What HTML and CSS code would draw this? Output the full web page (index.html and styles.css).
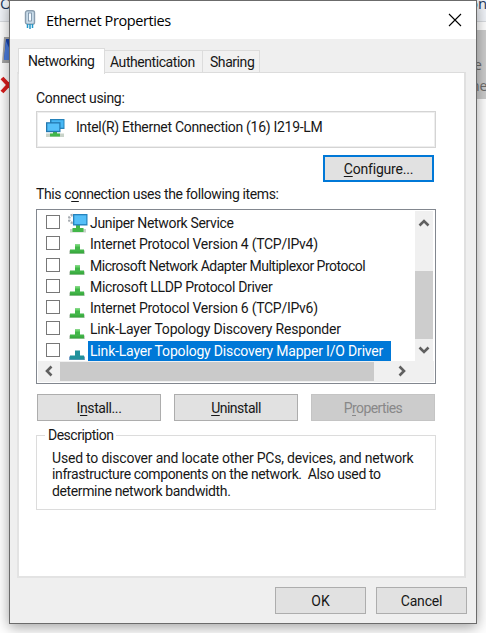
FILE: index.html
```html
<!DOCTYPE html>
<html lang="en">
<head>
<meta charset="utf-8">
<title>Ethernet Properties</title>
<link rel="stylesheet" href="styles.css">
</head>
<body>
<svg width="0" height="0" class="defs" aria-hidden="true">
  <symbol id="proto" viewBox="0 0 18 18">
    <path d="M1 13.500h16v3.500H1z" fill="#c9d3c9"/>
    <path d="M7 7.500h5v5h4v3.500H2v-3.500h5z" fill="#42b649"/>
    <path d="M7 7.500h5v2H7z" fill="#6bd36d"/>
    <path d="M2 14.500h14v2H2z" fill="#39a93f"/>
  </symbol>
  <symbol id="up" viewBox="0 0 12 8"><path d="M1.500 6.500 6 2l4.500 4.500" fill="none" stroke="#606060" stroke-width="2.600"/></symbol>
</svg>
<div class="backdrop">
  <div class="toolbar"><span>Organize ▾</span><span>Disable this network device</span><span>Diagnose this connection</span></div>
  <svg class="adapter" width="16" height="64" viewBox="0 0 16 64">
    <path d="M4 5h12v26H2z" fill="#a5a5a5"/><path d="M6 7h10v21H4z" fill="#1743ae"/><path d="M6 9l4 9 2 10H4z" fill="#4b7de0"/>
    <path d="M2 46l14 15M2 60l13-14" stroke="#d91e1e" stroke-width="4"/>
  </svg>
  <div class="adapter-tile"><span>e</span><span>ne</span></div>
</div>
<main class="window">
  <header class="titlebar">
    <svg class="plug" width="12" height="20" viewBox="0 0 12 20">
      <rect x="1.500" y=".8" width="9" height="13.400" rx="2" fill="#c9dcea" stroke="#8a9dae" stroke-width="1.400"/>
      <rect x="4.500" y="3" width="3" height="8" fill="#f5faff" stroke="#7189a0" stroke-width=".8"/>
      <path d="M3.500 14v4M6 14v5M8.500 14v4" stroke="#2397c9" stroke-width="1.500"/>
    </svg>
    <h1>Ethernet Properties</h1>
    <svg class="close" width="14" height="14" viewBox="0 0 14 14"><path d="M1 1l12 12M13 1 1 13" stroke="#000" stroke-width="1.100"/></svg>
  </header>
  <nav class="tabs">
    <div class="tab active"><span class="t-net">Networking</span></div>
    <div class="tab auth"><span class="t-auth">Authentication</span></div>
    <div class="tab share"><span class="t-share">Sharing</span></div>
  </nav>
  <section class="panel">
    <div class="label t-using">Connect using:</div>
    <div class="device">
      <svg width="20" height="20" viewBox="0 0 20 20">
        <path d="M5 1h14.500v10H5z" fill="#2582ba"/><path d="M6.500 2.200h12v7.500h-12z" fill="#48b8f5"/>
        <path d="M1 15.500h18v3.500H1z" fill="#c9d3c9"/><path d="M8 13h4v2.500h3v3H5v-3h3z" fill="#42b649"/>
        <path d="M1 4.200h14.500v10H1z" fill="#2478af"/><path d="M2.300 5.500h12v7.300h-12z" fill="#55c1fa"/>
      </svg>
      <span class="t-intel">Intel(R) Ethernet Connection (16) I219-LM</span>
    </div>
    <div class="configure-row"><button class="btn configure"><span class="t-conf"><u>C</u>onfigure...</span></button></div>
    <div class="label items-label t-items">This c<u>o</u>nnection uses the following items:</div>
    <div class="list">
      <div class="rows">
        <div class="row"><i></i><svg class="client" width="20" height="20" viewBox="0 0 20 20">
          <circle cx="5" cy="6" r="4" fill="none" stroke="#a8adb2" stroke-width="2.400" stroke-dasharray="2 1.200"/>
          <path d="M2 16h16v3.500H2z" fill="#c9d3c9"/><path d="M8 12h4v3h3.500v4H4.500v-4H8z" fill="#42b649"/>
          <path d="M5 1h14.500v11.500H5z" fill="#2583bd"/><path d="M6.300 2.300h12v8.800h-12z" fill="#55bff8"/></svg><span class="r1">Juniper Network Service</span></div>
        <div class="row"><i></i><svg><use href="#proto"/></svg><span class="r2">Internet Protocol Version 4 (TCP/IPv4)</span></div>
        <div class="row"><i></i><svg><use href="#proto"/></svg><span class="r3">Microsoft Network Adapter Multiplexor Protocol</span></div>
        <div class="row"><i></i><svg><use href="#proto"/></svg><span class="r4">Microsoft LLDP Protocol Driver</span></div>
        <div class="row"><i></i><svg><use href="#proto"/></svg><span class="r5">Internet Protocol Version 6 (TCP/IPv6)</span></div>
        <div class="row"><i></i><svg><use href="#proto"/></svg><span class="r6">Link-Layer Topology Discovery Responder</span></div>
        <div class="row selected"><i></i><svg viewBox="0 0 18 18"><path d="M1 13.500h16v3.500H1z" fill="#779fc8"/><path d="M7 7.500h5v5h4v4H2v-4h5z" fill="#20919b"/></svg><span class="r7">Link-Layer Topology Discovery Mapper I/O Driver</span></div>
      </div>
      <div class="vbar"><svg class="arrow"><use href="#up"/></svg><div class="vthumb"></div><svg class="arrow down"><use href="#up"/></svg></div>
      <div class="hbar"><svg class="arrow left"><use href="#up"/></svg><div class="hthumb"></div><svg class="arrow right"><use href="#up"/></svg></div>
    </div>
    <div class="actions">
      <button class="btn"><span class="t-inst">I<u>n</u>stall...</span></button><button class="btn"><span class="t-unin"><u>U</u>ninstall</span></button><button class="btn" disabled><span class="t-prop">P<u>r</u>operties</span></button>
    </div>
    <fieldset class="group">
      <legend><span class="t-desc">Description</span></legend>
      <p><span class="d1">Used to discover and locate other PCs, devices, and network</span><br><span class="d2">infrastructure components on the network.&nbsp; Also used to</span><br><span class="d3">determine network bandwidth.</span></p>
    </fieldset>
  </section>
  <footer class="footer"><button class="btn"><span>OK</span></button><button class="btn"><span class="t-cancel">Cancel</span></button></footer>
</main>
</body>
</html>
```
FILE: styles.css
```css
* { box-sizing: border-box; }
body { margin: 0; width: 486px; height: 633px; overflow: hidden; position: relative; background: #fff; font: 14px/17px Roboto, "Liberation Sans", sans-serif; color: #171717; }
.defs { position: absolute; }
.backdrop { position: absolute; inset: 0; overflow: hidden; }
.toolbar { display: flex; background: #f1f4f9; border-bottom: 1px solid #d9dce0; color: #1e395b; font: 15px/20px "Open Sans", sans-serif; white-space: nowrap; gap: 36px; margin-top: -7px; height: 29px; }
.toolbar span:nth-child(3) { margin-left: -26px; }
.adapter { display: block; margin-top: 10px; }
.adapter-tile { position: absolute; left: 476px; top: 30px; width: 10px; height: 69px; background: #ccc; color: #6d6d6d; padding-top: 24px; font: 14px/21px "Open Sans", sans-serif; }
.adapter-tile span { display: block; margin-left: -2px; }
.adapter-tile span:last-child { margin-left: -5px; }
.window { position: absolute; left: 9px; top: 0; width: 468px; height: 624px; border: 1px solid #6b6b6b; background: #efefef; box-shadow: 0 3px 13px rgba(0,0,0,.38); }
.titlebar { display: flex; align-items: center; height: 38px; background: #fff; padding: 0 15px 0 14px; }
.plug { margin-top: -1px; }
h1 { margin: 1px 0 0 10px; font: 14.500px/20px "Open Sans", sans-serif; color: #000; letter-spacing: -.4px; flex: 1; white-space: nowrap; }
.close { margin-right: -1px; }
.tabs { display: flex; align-items: flex-end; height: 35px; padding-left: 8px; position: relative; z-index: 1; }
.tab { height: 23px; border: 1px solid #dcdcdc; border-left: 0; width: 57px; padding-left: 7px; line-height: 23px; white-space: nowrap; background: #f1f1f1; margin-bottom: 1px; }
.active { width: 87px; height: 26px; background: #fff; border-left: 1px solid #dcdcdc; border-bottom: 0; padding-left: 9px; line-height: 24px; margin-bottom: 0; }
.auth { width: 98px; padding-left: 5px; }
.panel { margin: -2px 10px 0 7px; height: 506px; border: 2px solid #e3e3e3; border-top: 1px solid #dcdcdc; border-right-color: #e0e0e0; background: #fff; padding: 17px 28px 0 17px; }
.label { height: 17px; white-space: pre; }
.device { display: flex; align-items: flex-start; height: 37px; margin-top: 4px; border: 1px solid #d4d4d4; outline: 1px solid #eee; outline-offset: -2px; padding: 6px 8px; white-space: nowrap; }
.device svg { flex: none; }
.device span { margin-left: 11px; line-height: 18px; }
.configure-row { display: flex; justify-content: flex-end; margin: 7px 2px 0 0; }
.btn { display: flex; align-items: center; justify-content: center; padding: 0; height: 27px; border: 1px solid #adadad; border-radius: 0; background: #e1e1e1; color: #171717; font: inherit; white-space: nowrap; }
.btn:disabled { color: #888; background: #ccc; border-color: #c4c4c4; }
.configure { width: 111px; border: 2px solid #0078d7; padding-top: 1px; }
u { text-underline-offset: 2px; text-decoration-thickness: 1px; }
.items-label { margin-top: 4px; }
.list { display: grid; grid-template: 150px 21px / 377px 18px 1px; height: 175px; margin-top: 6px; border: 1px solid #82878f; padding: 1px; background: #fff; }
.rows { padding-top: 2px; min-width: 0; }
.row { display: flex; height: 21.280px; align-items: center; white-space: nowrap; }
.row i { width: 14px; height: 14px; border: 1px solid #777; margin: -3px 8px 0 8px; flex: none; }
.row svg { width: 18px; height: 18px; margin-right: 3px; flex: none; margin-top: 2px; }
.row .client { width: 20px; height: 20px; margin-right: 1px; margin-top: -2px; }
.row span { line-height: 21px; height: 21px; padding-left: 1px; }
.selected span { background: #0078d7; color: #fff; width: 303px; padding-left: 2px; margin-left: -1px; }
.vbar { display: flex; flex-direction: column; align-items: center; background: #f0f0f0; padding-top: 8px; }
.arrow { width: 12px; height: 8px; flex: none; }
.vthumb { width: 18px; height: 68px; margin: 44px 0 7px; background: #cdcdcd; }
.down { transform: rotate(180deg); }
.hbar { grid-column: 1 / 4; display: flex; align-items: center; background: #f0f0f0; padding: 0 0 1px 5px; }
.hthumb { width: 314px; height: 19px; margin: 0 22px 0 5px; background: #cacaca; }
.left { transform: rotate(-90deg); }
.right { transform: rotate(90deg); }
.actions { display: flex; justify-content: space-between; margin: 10px 1px 0; }
.actions .btn { width: 124px; padding-top: 1px; }
.group { margin: 6px 0 0; padding: 0 0 0 14px; height: 83px; border: 1px solid #dcdcdc; min-width: 0; }
legend { margin-left: -6px; padding: 0 3px; height: 17px; white-space: nowrap; }
.group p { margin: 6px 0 0 1px; line-height: 16.400px; white-space: nowrap; }
.footer { display: flex; justify-content: flex-end; gap: 10px; padding: 9px 9px 0; }
.footer .btn { width: 91px; padding-top: 1px; }

/* Per-string tracking */
.t-net, .t-unin, .t-desc { letter-spacing: -.5px; }
.t-auth, .t-share { letter-spacing: -.44px; }
.t-using, .t-intel { letter-spacing: -.3px; }
.t-conf, .t-cancel { letter-spacing: -.2px; }
.t-items { letter-spacing: -.38px; }
.t-inst { letter-spacing: -.4px; }
.t-prop { letter-spacing: -.6px; }
.r1, .r4 { letter-spacing: -.34px; }
.r2, .r5 { letter-spacing: -.28px; }
.r3 { letter-spacing: -.49px; }
.r6 { letter-spacing: -.2px; }
.r7 { letter-spacing: -.18px; }
.d1 { letter-spacing: -.2px; }
.d2 { letter-spacing: -.38px; }
.d3 { letter-spacing: -.37px; }
```
